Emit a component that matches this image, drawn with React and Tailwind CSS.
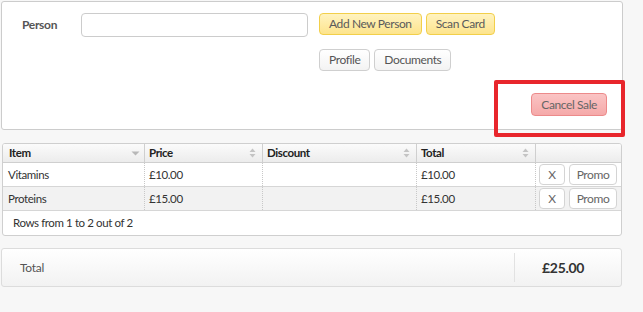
import React from "react";

function SortBoth() {
  return (
    <svg width="7" height="10" viewBox="0 0 7 10" className="shrink-0">
      <path d="M3.5 0.5 L6.5 4 L0.5 4 Z" fill="#c4c4c4" />
      <path d="M3.5 9.5 L6.5 6 L0.5 6 Z" fill="#c4c4c4" />
    </svg>
  );
}
function SortDown() {
  return (
    <svg width="9" height="10" viewBox="0 0 9 10" className="shrink-0">
      <path d="M0.5 3.5 L8.5 3.5 L4.5 7.5 Z" fill="#b8b8b8" />
    </svg>
  );
}

const btn =
  "h-[22px] px-[9px] rounded-[4px] border text-[12px] tracking-[-0.4px] leading-none flex items-center";
const greyBtn =
  btn + " border-[#cfcfcf] bg-gradient-to-b from-white to-[#f3f3f3] text-[#555]";

function Row({ item, price, total, shaded }) {
  return (
    <div
      className={
        "flex h-[24px] border-b border-[#d6d6d6] text-[11.5px] tracking-[-0.4px] text-[#333] " +
        (shaded ? "bg-[#f2f2f2]" : "bg-white")
      }
    >
      <div className="w-[142px] pl-[5px] flex items-center border-r border-dotted border-[#c8c8c8]">
        {item}
      </div>
      <div className="w-[118px] pl-[4px] flex items-center border-r border-dotted border-[#c8c8c8]">
        {price}
      </div>
      <div className="w-[154px] border-r border-dotted border-[#c8c8c8]" />
      <div className="w-[119px] pl-[4px] flex items-center border-r border-dotted border-[#c8c8c8]">
        {total}
      </div>
      <div className="flex-1 flex items-center pl-[3px] gap-[4px]">
        <button className="w-[26px] h-[21px] rounded-[4px] border border-[#d4d4d4] bg-white text-[#666] text-[12px] tracking-[-0.4px] flex items-center justify-center">
          X
        </button>
        <button className="w-[48px] h-[21px] rounded-[4px] border border-[#d4d4d4] bg-white text-[#666] text-[12px] tracking-[-0.4px] flex items-center justify-center">
          Promo
        </button>
      </div>
    </div>
  );
}

export default function App() {
  return (
    <div
      className="relative w-[643px] h-[312px] bg-[#f7f7f7] overflow-hidden"
      style={{ fontFamily: 'Lato, "Liberation Sans", sans-serif' }}
    >
      {/* Top panel */}
      <div className="ml-[1px] mt-[1px] w-[622px] h-[129px] bg-white border border-[#cccccc] rounded-[3px] flex flex-col">
        <div className="flex pt-[11px]">
          <div className="w-[79px] pl-[20px] pt-[3px] text-[12px] tracking-[-0.3px] font-bold text-[#555]">
            Person
          </div>
          <div className="w-[227px] h-[24px] rounded-[4px] border border-[#cccccc] bg-white" />
          <div className="ml-[11px] flex flex-col gap-[14px]">
            <div className="flex gap-[4px]">
              <button className={btn + " border-[#f2cf4a] bg-gradient-to-b from-[#fff3c0] to-[#fde48c] text-[#5a5a5a]"}>
                Add New Person
              </button>
              <button className={btn + " border-[#f2cf4a] bg-gradient-to-b from-[#fff3c0] to-[#fde48c] text-[#5a5a5a]"}>
                Scan Card
              </button>
            </div>
            <div className="flex gap-[4px]">
              <button className={greyBtn}>Profile</button>
              <button className={greyBtn}>Documents</button>
            </div>
          </div>
        </div>
        <div className="flex justify-end pr-[15px] mt-[22px]">
          <button className="h-[23px] px-[9px] rounded-[4px] border border-[#ec8a8a] bg-gradient-to-b from-[#fac4c4] to-[#f5a9a9] text-[#666] text-[12px] tracking-[-0.4px] leading-none flex items-center">
            Cancel Sale
          </button>
        </div>
      </div>

      {/* Annotation box */}
      <div className="absolute left-[494px] top-[80px] w-[131px] h-[57px] border-[4px] border-[#e8262c] rounded-[2px]" />

      {/* Table */}
      <div className="ml-[2px] mt-[13px] w-[620px] bg-white border border-[#cfcfcf] rounded-[3px] overflow-hidden">
        <div className="flex h-[19px] border-b border-[#cfcfcf] bg-gradient-to-b from-[#fbfbfb] to-[#ececec] text-[11.5px] tracking-[-0.4px] font-bold text-[#222]">
          <div className="w-[142px] pl-[6px] pr-[4px] flex items-center justify-between border-r border-[#cfcfcf]">
            <span>Item</span>
            <SortDown />
          </div>
          <div className="w-[118px] pl-[4px] pr-[6px] flex items-center justify-between border-r border-[#cfcfcf]">
            <span>Price</span>
            <SortBoth />
          </div>
          <div className="w-[154px] pl-[4px] pr-[6px] flex items-center justify-between border-r border-[#cfcfcf]">
            <span>Discount</span>
            <SortBoth />
          </div>
          <div className="w-[119px] pl-[4px] pr-[6px] flex items-center justify-between border-r border-[#cfcfcf]">
            <span>Total</span>
            <SortBoth />
          </div>
          <div className="flex-1" />
        </div>
        <Row item="Vitamins" price="£10.00" total="£10.00" />
        <Row item="Proteins" price="£15.00" total="£15.00" shaded />
        <div className="h-[24px] pl-[10px] flex items-center text-[11.5px] tracking-[-0.4px] text-[#333]">
          Rows from 1 to 2 out of 2
        </div>
      </div>

      {/* Total panel */}
      <div className="ml-[1px] mt-[12px] w-[621px] h-[39px] border border-[#dcdcdc] rounded-[3px] bg-gradient-to-b from-white to-[#f2f2f2] flex">
        <div className="flex-1 flex items-center pl-[18px] text-[12px] tracking-[-0.3px] text-[#555]">
          Total
        </div>
        <div className="my-[4px] w-px bg-[#e2e2e2]" />
        <div className="w-[106px] pl-[27px] flex items-center text-[14px] tracking-[-0.3px] font-bold text-[#333]">
          £25.00
        </div>
      </div>
    </div>
  );
}
